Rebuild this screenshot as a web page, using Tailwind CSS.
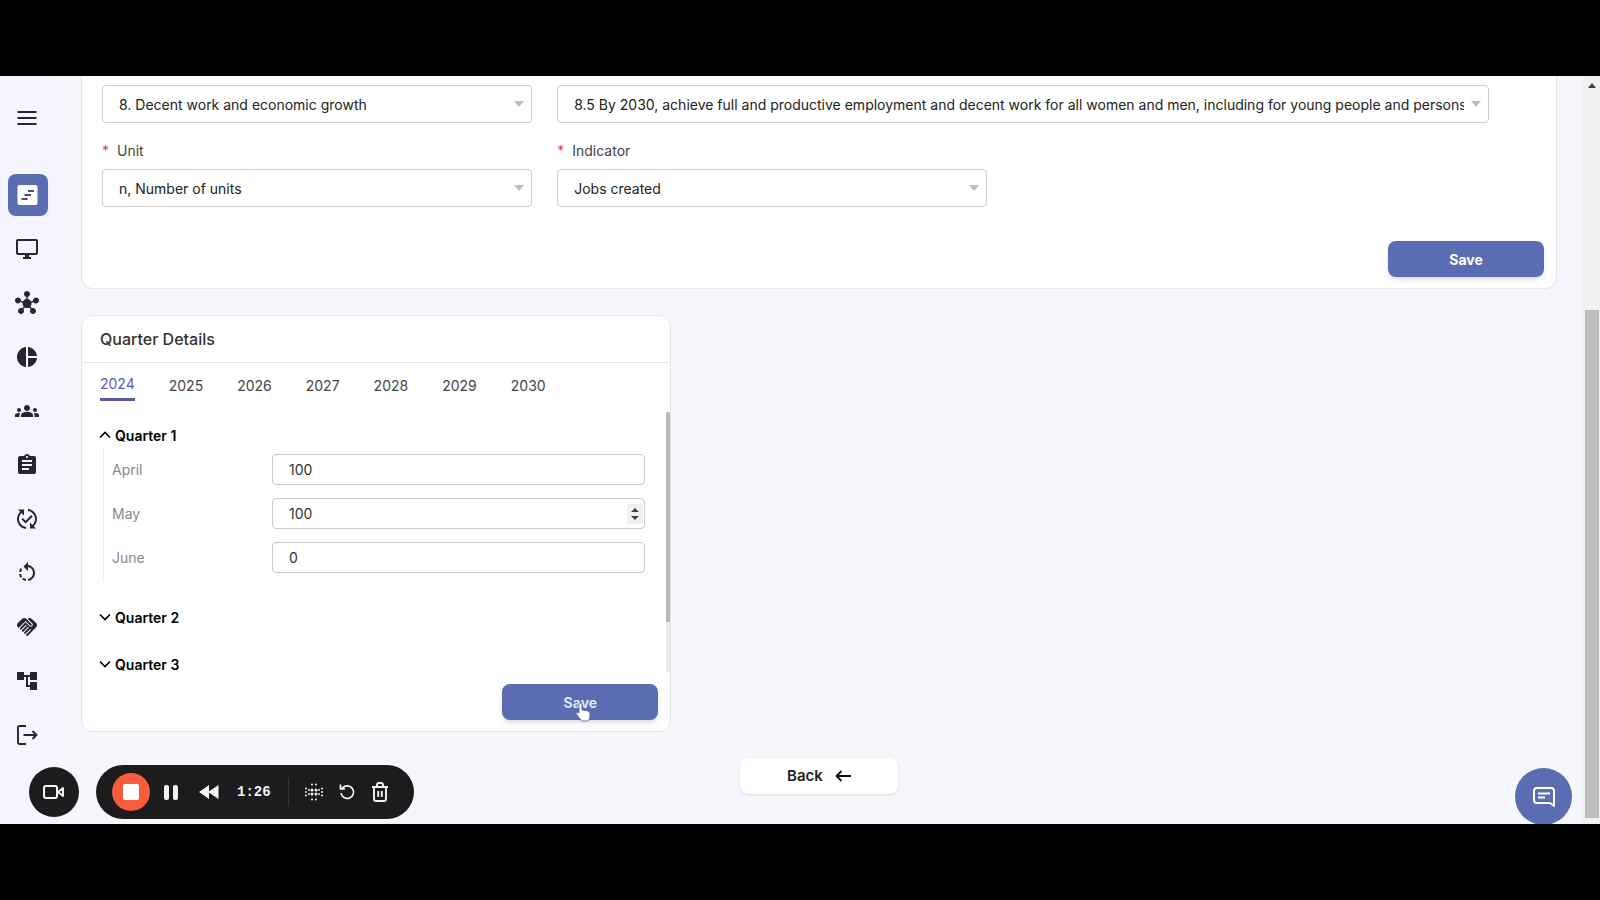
<!DOCTYPE html>
<html lang="en">
<head>
  <meta charset="UTF-8">
  <meta name="viewport" content="width=device-width, initial-scale=1.0">
  <title>Quarter Details</title>
  <script src="https://cdn.jsdelivr.net/npm/@tailwindcss/browser@4"></script>
</head>
<body class="h-screen bg-black py-[76px] font-['Inter','Liberation_Sans',sans-serif] text-[14px] text-[#222]">
  <div class="relative flex h-full overflow-hidden bg-[#f6f7fc]">

    <!-- Sidebar -->
    <aside class="flex w-14 shrink-0 flex-col bg-[#f4f5ff] pt-[30px] pl-2 text-[#25262f]">
      <button type="button" aria-label="Menu" class="flex h-6 w-[38px] items-center justify-center">
        <svg class="size-6" viewBox="0 0 24 24" fill="currentColor"><path d="M2.5 5h19v2h-19zM2.5 11h19v2h-19zM2.5 17h19v2h-19z"/></svg>
      </button>
      <nav class="mt-11 flex flex-col gap-3">
        <a href="#" aria-label="Projects" class="flex h-[42px] w-10 items-center justify-center rounded-lg bg-[#5a6cb2] text-white">
          <svg class="size-6" viewBox="0 0 24 24"><rect x="1.5" y="2" width="20" height="20" rx="2" fill="currentColor"/><path d="M12 8h6M8.5 12H15M5.5 16h6" stroke="#46527f" stroke-width="1.8" fill="none"/></svg>
        </a>
        <a href="#" aria-label="Monitor" class="flex h-[42px] w-[38px] items-center justify-center">
          <svg class="size-6" viewBox="0 0 24 24" fill="currentColor"><path d="M21 2H3c-1.1 0-2 .9-2 2v12c0 1.1.9 2 2 2h7v2H8v2h8v-2h-2v-2h7c1.1 0 2-.9 2-2V4c0-1.1-.9-2-2-2zm0 14H3V4h18v12z"/></svg>
        </a>
        <a href="#" aria-label="Network" class="flex h-[42px] w-[38px] items-center justify-center">
          <svg class="size-6" viewBox="0 0 24 24" fill="currentColor"><path d="M8.4 18.2c.38.5.6 1.12.6 1.8 0 1.66-1.34 3-3 3s-3-1.34-3-3 1.34-3 3-3c.44 0 .85.09 1.23.26l1.41-1.77c-.92-1.03-1.29-2.39-1.09-3.69l-2.03-.68C4.98 11.95 4.06 12.5 3 12.5c-1.66 0-3-1.34-3-3s1.34-3 3-3 3 1.34 3 3c0 .07 0 .14-.01.21l2.03.68c.64-1.21 1.82-2.09 3.22-2.32V5.91C9.96 5.57 9 4.4 9 3c0-1.66 1.34-3 3-3s3 1.34 3 3c0 1.4-.96 2.57-2.25 2.91v2.16c1.4.23 2.58 1.11 3.22 2.32l2.03-.68C18 9.64 18 9.57 18 9.5c0-1.66 1.34-3 3-3s3 1.34 3 3-1.34 3-3 3c-1.06 0-1.98-.55-2.52-1.37l-2.03.68c.2 1.29-.16 2.65-1.09 3.69l1.41 1.77C17.15 17.09 17.56 17 18 17c1.66 0 3 1.34 3 3s-1.34 3-3 3-3-1.34-3-3c0-.68.22-1.3.6-1.8l-1.41-1.77c-1.35.75-3.01.76-4.37 0L8.4 18.2z"/></svg>
        </a>
        <a href="#" aria-label="Reports" class="flex h-[42px] w-[38px] items-center justify-center">
          <svg class="size-6" viewBox="0 0 24 24" fill="currentColor"><path d="M11 2v20c-5.07-.5-9-4.79-9-10s3.93-9.5 9-10zm2.03 0v8.99H22c-.47-4.74-4.24-8.52-8.97-8.99zm0 11.01V22c4.74-.47 8.5-4.25 8.97-8.99h-8.97z"/></svg>
        </a>
        <a href="#" aria-label="Groups" class="flex h-[42px] w-[38px] items-center justify-center">
          <svg class="size-6" viewBox="0 0 24 24" fill="currentColor"><path d="M4 13c1.1 0 2-.9 2-2s-.9-2-2-2-2 .9-2 2 .9 2 2 2zm1.13 1.1c-.37-.06-.74-.1-1.13-.1-.99 0-1.93.21-2.78.58C.48 14.9 0 15.62 0 16.43V18h4.5v-1.61c0-.83.23-1.61.63-2.29zM20 13c1.1 0 2-.9 2-2s-.9-2-2-2-2 .9-2 2 .9 2 2 2zm4 3.43c0-.81-.48-1.53-1.22-1.85-.85-.37-1.79-.58-2.78-.58-.39 0-.76.04-1.13.1.4.68.63 1.46.63 2.29V18H24v-1.57zm-7.76-2.78c-1.17-.52-2.61-.9-4.24-.9-1.63 0-3.07.39-4.24.9C6.68 14.13 6 15.21 6 16.39V18h12v-1.61c0-1.18-.68-2.26-1.76-2.74zM9 9c0 1.66 1.34 3 3 3s3-1.34 3-3-1.34-3-3-3-3 1.34-3 3z"/></svg>
        </a>
        <a href="#" aria-label="Assignments" class="flex h-[42px] w-[38px] items-center justify-center">
          <svg class="size-6" viewBox="0 0 24 24" fill="currentColor"><path d="M19 3h-4.18C14.4 1.84 13.3 1 12 1c-1.3 0-2.4.84-2.82 2H5c-1.1 0-2 .9-2 2v14c0 1.1.9 2 2 2h14c1.1 0 2-.9 2-2V5c0-1.1-.9-2-2-2zm-7 0c.55 0 1 .45 1 1s-.45 1-1 1-1-.45-1-1 .45-1 1-1zm2 14H7v-2h7v2zm3-4H7v-2h10v2zm0-4H7V7h10v2z"/></svg>
        </a>
        <a href="#" aria-label="Changes" class="flex h-[42px] w-[38px] items-center justify-center">
          <svg class="size-6" viewBox="0 0 24 24" fill="currentColor"><path d="M17.66 9.53l-7.07 7.07-4.24-4.24 1.41-1.41 2.83 2.83 5.66-5.66 1.41 1.41zM4 12c0-2.33 1.02-4.42 2.62-5.88L9 8.5v-6H3l2.2 2.2C3.24 6.52 2 9.11 2 12c0 5.19 3.95 9.45 9 9.95v-2.02c-3.94-.49-7-3.86-7-7.93zm18 0c0-5.19-3.95-9.45-9-9.95v2.02c3.94.49 7 3.86 7 7.93 0 2.33-1.02 4.42-2.62 5.88L15 15.5v6h6l-2.2-2.2c1.96-1.82 3.2-4.41 3.2-7.3z"/></svg>
        </a>
        <a href="#" aria-label="History" class="flex h-[42px] w-[38px] items-center justify-center">
          <svg class="size-6" viewBox="0 0 24 24" fill="currentColor"><path d="M7.11 8.53L5.7 7.11C4.8 8.27 4.24 9.61 4.07 11h2.02c.14-.87.49-1.72 1.02-2.47zM6.09 13H4.07c.17 1.39.72 2.73 1.62 3.89l1.41-1.42c-.52-.75-.87-1.59-1.01-2.47zm1.01 5.32c1.16.9 2.51 1.44 3.9 1.61V17.9c-.87-.15-1.71-.49-2.46-1.03L7.1 18.32zM13 4.07V1L8.45 5.55 13 10V6.09c2.84.48 5 2.94 5 5.91s-2.16 5.43-5 5.91v2.02c3.95-.49 7-3.85 7-7.93s-3.05-7.44-7-7.93z"/></svg>
        </a>
        <a href="#" aria-label="Partners" class="flex h-[42px] w-[38px] items-center justify-center">
          <svg class="size-6" viewBox="0 0 24 24" fill="currentColor"><path d="M16.48 10.41c-.39.39-1.04.39-1.43 0l-4.47-4.46-7.05 7.04-.66-.63c-1.17-1.17-1.17-3.07 0-4.24l4.24-4.24c1.17-1.17 3.07-1.17 4.24 0L16.48 9c.39.39.39 1.02 0 1.41zm.7-2.12c.78.78.78 2.05 0 2.83-1.27 1.27-2.61.22-2.83 0l-3.76-3.76-5.57 5.57c-.39.39-.39 1.02 0 1.41.39.39 1.02.39 1.42 0l4.62-4.62.71.71-4.62 4.62c-.39.39-.39 1.02 0 1.41.39.39 1.02.39 1.42 0l4.62-4.62.71.71-4.62 4.62c-.39.39-.39 1.02 0 1.41.39.39 1.02.39 1.41 0l4.62-4.62.71.71-4.62 4.62c-.39.39-.39 1.02 0 1.41.39.39 1.02.39 1.41 0l8.32-8.34c1.17-1.17 1.17-3.07 0-4.24l-4.24-4.24c-1.15-1.15-3.01-1.17-4.18-.06l4.47 4.47z"/></svg>
        </a>
        <a href="#" aria-label="Structure" class="flex h-[42px] w-[38px] items-center justify-center">
          <svg class="size-6" viewBox="0 0 24 24" fill="currentColor"><path d="M22 11V3h-7v3H9V3H2v8h7V8h2v10h4v3h7v-8h-7v3h-2V8h2v3z"/></svg>
        </a>
        <a href="#" aria-label="Log out" class="flex h-[42px] w-[38px] items-center justify-center">
          <svg class="size-6" viewBox="0 0 24 24" fill="none" stroke="currentColor" stroke-width="1.9"><path d="M11 3H4.500Q3 3 3 4.500v15Q3 21 4.500 21H11M8.500 12H21M17.500 8l4 4-4 4"/></svg>
        </a>
      </nav>
    </aside>

    <!-- Page content -->
    <main class="min-w-0 flex-1 pr-[26px] pl-[25px]">
      <form class="rounded-b-xl border border-t-0 border-[#e6e7ec] bg-white px-5 pt-[9px] pb-[11px]">
        <div class="flex gap-[25px]">
          <div class="relative w-[30%]">
            <select aria-label="Goal" class="h-[38px] w-full appearance-none rounded border border-[#cfcfcf] bg-white pr-6 pl-4 text-[#222]"><option>8. Decent work and economic growth</option></select>
            <svg class="pointer-events-none absolute top-4 right-2 h-[6px] w-[10px] text-[#bdbdbd]" viewBox="0 0 10 6" fill="currentColor"><path d="M0 0h10L5 6z"/></svg>
          </div>
          <div class="relative w-[65%]">
            <select aria-label="Target" class="h-[38px] w-full appearance-none rounded border border-[#cfcfcf] bg-white pr-6 pl-4 text-[#222]"><option>8.5 By 2030, achieve full and productive employment and decent work for all women and men, including for young people and persons with disabilities</option></select>
            <svg class="pointer-events-none absolute top-4 right-2 h-[6px] w-[10px] text-[#bdbdbd]" viewBox="0 0 10 6" fill="currentColor"><path d="M0 0h10L5 6z"/></svg>
          </div>
        </div>
        <div class="mt-4 flex gap-[25px]">
          <div class="w-[30%]">
            <label for="unit" class="flex h-[30px] gap-2 leading-6 text-[#444]"><span class="text-[#e0405a]">*</span>Unit</label>
            <div class="relative">
              <select id="unit" class="h-[38px] w-full appearance-none rounded border border-[#cfcfcf] bg-white pr-6 pl-4 text-[#222]"><option>n, Number of units</option></select>
              <svg class="pointer-events-none absolute top-4 right-2 h-[6px] w-[10px] text-[#bdbdbd]" viewBox="0 0 10 6" fill="currentColor"><path d="M0 0h10L5 6z"/></svg>
            </div>
          </div>
          <div class="w-[30%]">
            <label for="indicator" class="flex h-[30px] gap-2 leading-6 text-[#444]"><span class="text-[#e0405a]">*</span>Indicator</label>
            <div class="relative">
              <select id="indicator" class="h-[38px] w-full appearance-none rounded border border-[#cfcfcf] bg-white pr-6 pl-4 text-[#222]"><option>Jobs created</option></select>
              <svg class="pointer-events-none absolute top-4 right-2 h-[6px] w-[10px] text-[#bdbdbd]" viewBox="0 0 10 6" fill="currentColor"><path d="M0 0h10L5 6z"/></svg>
            </div>
          </div>
        </div>
        <div class="-mr-2 mt-[34px] flex justify-end">
          <button type="button" class="h-9 w-[156px] rounded-lg bg-[#5a6cb2] font-bold text-white shadow-md">Save</button>
        </div>
      </form>

      <!-- Quarter details card -->
      <section class="mt-[26px] w-[40%] rounded-xl border border-[#e6e7ec] bg-white">
        <h2 class="flex h-[47px] items-center border-b border-[#e6e7ec] px-[18px] text-[16px] font-medium text-[#333]">Quarter Details</h2>
        <div class="flex h-[49px] items-start gap-[34px] px-[18px] pt-[11px] text-[14px] text-[#444]">
          <button type="button" class="border-b-[3px] border-[#5a559f] pb-1 leading-5 text-[#5a5ba8]">2024</button>
          <button type="button" class="leading-6">2025</button>
          <button type="button" class="leading-6">2026</button>
          <button type="button" class="leading-6">2027</button>
          <button type="button" class="leading-6">2028</button>
          <button type="button" class="leading-6">2029</button>
          <button type="button" class="leading-6">2030</button>
        </div>
        <div class="flex h-[260px] overflow-hidden">
          <div class="min-w-0 flex-1 pt-[11px] pr-[21px] pl-[17px]">
            <button type="button" class="flex h-6 items-center gap-1 font-semibold text-black">
              <svg class="size-3" viewBox="0 0 12 12" fill="none" stroke="currentColor" stroke-width="1.6"><path d="M1 8.500l5-5 5 5"/></svg>
              Quarter 1
            </button>
            <div class="ml-1 flex h-[135px] flex-col gap-[13px] border-l border-[#ececef] pt-[7px] pl-2 text-[#888]">
              <div class="flex items-center">
                <label for="april" class="w-[30%]">April</label>
                <input id="april" type="number" value="100" class="h-[31px] w-[70%] rounded border border-[#c8c8c8] px-4 text-[#333]">
              </div>
              <div class="relative flex items-center">
                <label for="may" class="w-[30%]">May</label>
                <input id="may" type="number" value="100" class="h-[31px] w-[70%] rounded border border-[#c8c8c8] px-4 text-[#333]">
                <span class="pointer-events-none absolute top-[6px] right-[2px] flex h-5 w-4 items-center justify-center bg-[#f0f0f0] text-[#444]">
                  <svg class="h-[14px] w-2" viewBox="0 0 8 14" fill="currentColor"><path d="M0 5l4-4 4 4zM0 9h8l-4 4z"/></svg>
                </span>
              </div>
              <div class="flex items-center">
                <label for="june" class="w-[30%]">June</label>
                <input id="june" type="number" value="0" class="h-[31px] w-[70%] rounded border border-[#c8c8c8] px-4 text-[#333]">
              </div>
            </div>
            <button type="button" class="mt-[23px] flex h-6 items-center gap-1 font-semibold text-black">
              <svg class="size-3" viewBox="0 0 12 12" fill="none" stroke="currentColor" stroke-width="1.6"><path d="M1 3.500l5 5 5-5"/></svg>
              Quarter 2
            </button>
            <button type="button" class="mt-[23px] flex h-6 items-center gap-1 font-semibold text-black">
              <svg class="size-3" viewBox="0 0 12 12" fill="none" stroke="currentColor" stroke-width="1.6"><path d="M1 3.500l5 5 5-5"/></svg>
              Quarter 3
            </button>
          </div>
          <div class="w-1 bg-[#ebebee]"><div class="h-[210px] rounded-t bg-[#b9b9bb]"></div></div>
        </div>
        <div class="flex justify-end pt-3 pr-3 pb-[11px]">
          <button type="button" class="relative h-9 w-[156px] rounded-lg bg-[#5a6cb2] font-bold text-[#dfe4f7] shadow-md">
            Save
            <svg class="absolute top-[18px] left-[73px] h-5 w-4" viewBox="0 0 16 20"><path d="M4 10V3Q4 1 5.500 1T7 3v5l6 1q2 .4 2 2.500V14q0 3-2 5H7Q4 16 1 11.500 2 9.500 4 11z" fill="#fff" stroke="#46527f" stroke-width=".7"/></svg>
          </button>
        </div>
      </section>

      <div class="mt-[26px] flex justify-center">
        <button type="button" class="flex h-9 w-[158px] items-center justify-center gap-3 rounded-lg bg-white text-[15px] font-semibold text-[#222] shadow">
          Back
          <svg class="size-4" viewBox="0 0 16 16" fill="none" stroke="#111" stroke-width="1.8"><path d="M16 8H1.500M6.500 3l-5 5 5 5"/></svg>
        </button>
      </div>
    </main>

    <!-- Page scrollbar -->
    <div class="flex w-[17px] shrink-0 flex-col items-center bg-[#f1f1f3]">
      <svg class="mt-[7px] h-[5px] w-2" viewBox="0 0 8 5" fill="#444"><path d="M0 5l4-5 4 5z"/></svg>
      <div class="mt-[222px] mb-[6px] w-[14px] flex-1 bg-[#bdbdbd]"></div>
    </div>

    <!-- Recorder controls -->
    <div class="absolute bottom-[5px] left-[29px] flex items-center gap-[17px] text-[#f2f2f2]">
      <button type="button" aria-label="Camera" class="flex size-[50px] items-center justify-center rounded-full bg-[#1c1c1e]">
        <svg class="h-4 w-[22px]" viewBox="0 0 22 16" fill="none" stroke="currentColor" stroke-width="2"><rect x="1" y="2" width="13" height="12" rx="2"/><path d="M15 8l5-4v8z" stroke-linejoin="round"/></svg>
      </button>
      <div class="flex h-[54px] w-[318px] items-center rounded-full bg-[#1c1c1e] pl-4">
        <button type="button" aria-label="Stop" class="flex size-[38px] items-center justify-center rounded-full bg-[#fa5b3c]"><span class="size-4 rounded-xs bg-white"></span></button>
        <button type="button" aria-label="Pause" class="ml-[14px] flex w-[14px] justify-between"><span class="h-[15px] w-[5px] rounded-xs bg-[#f2f2f2]"></span><span class="h-[15px] w-[5px] rounded-xs bg-[#f2f2f2]"></span></button>
        <button type="button" aria-label="Rewind" class="ml-[21px]">
          <svg class="h-[14px] w-5" viewBox="0 0 20 14" fill="currentColor"><path d="M10 0v14L0 7zM19.500 0v14L9 7z"/></svg>
        </button>
        <span class="ml-[18px] w-10 font-['Liberation_Mono',monospace] text-[14px] font-bold">1:26</span>
        <span class="ml-[11px] h-7 w-px bg-[#333]"></span>
        <button type="button" aria-label="Effects" class="ml-4">
          <svg class="size-[18px]" viewBox="0 0 18 18" stroke="currentColor" fill="none" stroke-linecap="round"><path stroke-width="3" d="M7 7v.01M11 7v.01M7 11v.01M11 11v.01"/><path stroke-width="2" d="M7 1.500v.01M11 1.500v.01M7 16.500v.01M11 16.500v.01M1 5.500v.01M1 9v.01M1 12.500v.01M4 7v.01M4 11v.01M14 7v.01M14 11v.01M17 5.500v.01M17 9v.01M17 12.500v.01"/></svg>
        </button>
        <button type="button" aria-label="Restart" class="ml-[15px]">
          <svg class="size-[18px]" viewBox="0 0 18 18" fill="none" stroke="currentColor" stroke-width="1.7"><path d="M3 10a6.300 6.300 0 1 0 1.800-5.300L2.500 6M2.500 1.500V6H7"/></svg>
        </button>
        <button type="button" aria-label="Delete" class="ml-[15px]">
          <svg class="h-5 w-[18px]" viewBox="0 0 18 20" fill="none" stroke="currentColor" stroke-width="1.9"><path d="M1 5h16M3 5v12q0 2 2 2h8q2 0 2-2V5M6 5V3q0-2 2-2h2q2 0 2 2v2M7.200 9v6M10.800 9v6"/></svg>
        </button>
      </div>
    </div>

    <!-- Chat launcher -->
    <button type="button" aria-label="Chat" class="absolute right-7 -bottom-[1px] flex size-[57px] items-center justify-center rounded-full bg-[#5a6cb2] text-white">
      <svg class="size-6" viewBox="0 0 24 24" fill="none" stroke="currentColor" stroke-width="2"><path d="M22 21V6q0-3-3-3H5Q2 3 2 6v9q0 3 3 3h13z" stroke-linejoin="round"/><path d="M6 8.500h12M6 12.500h7"/></svg>
    </button>
  </div>
</body>
</html>
